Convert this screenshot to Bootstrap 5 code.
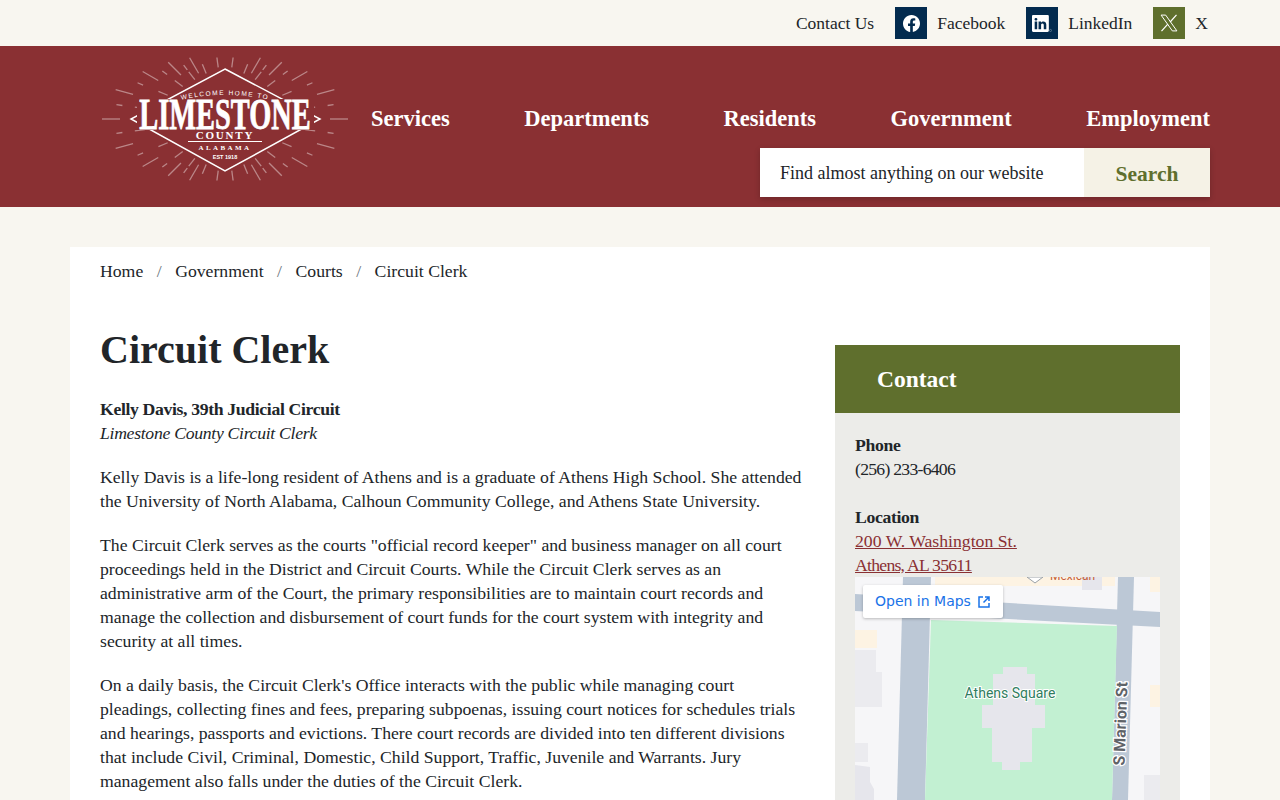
<!DOCTYPE html>
<html lang="en">
<head>
  <meta charset="UTF-8">
  <title>Circuit Clerk - Limestone County</title>
  <link href="https://cdn.jsdelivr.net/npm/bootstrap@5.3.0/dist/css/bootstrap.min.css" rel="stylesheet">
  <style>
    body { background: #f8f6f0; color: #212529; font-family: "Liberation Serif", serif; font-size: 17.7px; line-height: 24px; height: 800px; overflow: hidden; }
    a { color: #212529; text-decoration: none; }
    strong { letter-spacing: -.35px; }
    em { letter-spacing: -.3px; }
    .site-wrap { width: 1140px; margin: 0 auto; }
    .top-bar { height: 46px; padding-right: 2px; gap: 21px; }
    .top-bar a { font-size: 17.5px; }
    .social-link { gap: 10px; }
    .social-box { width: 32px; height: 32px; background: #032b4f; }
    .social-green { background: #5f6f2d; }
    .site-head { background: #8a3033; height: 161px; }
    .head-inner { padding-left: 30px; }
    .logo-box { width: 248px; height: 130px; margin-top: 8px; }
    .head-nav { padding-top: 61px; padding-left: 23px; }
    .head-nav a { color: #fff; font-weight: 700; font-size: 22.5px; }
    .head-search { width: 450px; height: 49px; margin-top: 17px; box-shadow: 0 2px 6px rgba(0,0,0,.2); }
    .head-search input { border: 0; border-radius: 0; padding: 2px 20px 0; font-size: 18px; color: #212529; box-shadow: none !important; height: 49px; }
    .head-search input::placeholder { color: #212529; opacity: 1; }
    .head-search button { border: 0; border-radius: 0; width: 126px; padding: 4px 0 0; background: #f5f2e6; color: #5f6f2d; font-weight: 700; font-size: 21.5px; }
    .main-panel { background: #fff; margin-top: 40px; padding: 12px 30px 0; height: 553px; overflow: hidden; }
    .crumb-sep { color: #6c757d; margin: 0 13.5px; }
    .page-title { font-family: "Liberation Serif", serif; font-weight: 700; font-size: 40px; line-height: 54px; margin: 40px 0 20px; letter-spacing: 0; }
    .body-col { width: 710px; }
    .body-col p { margin-bottom: 20px; }
    .side-col { width: 345px; margin-top: 62px; }
    .side-title { background: #5f6f2d; color: #fff; font-weight: 700; font-size: 23.5px; height: 68px; padding-left: 42px; }
    .side-body { background: #ecece9; padding: 20px 20px 0; height: 400px; }
    .side-body p { margin-bottom: 24px; }
    .side-body a { color: #8a3033; text-decoration: underline; }
    .tight-nums { letter-spacing: -.75px; }
    .map-box { position: relative; width: 305px; height: 223px; }
    .map-box svg { display: block; }
    .map-link { position: absolute; left: 8px; top: 8px; width: 140px; height: 33px; background: #fff; color: #1a73e8 !important; text-decoration: none !important; font-family: "DejaVu Sans", sans-serif; font-size: 14px; line-height: 33px; padding-left: 12px; gap: 6px; box-shadow: 0 1px 3px rgba(0,0,0,.25); border-radius: 2px; }
  </style>
</head>
<body>
  <div class="site-wrap top-bar d-flex justify-content-end align-items-center">
    <a href="#">Contact Us</a>
    <a href="#" class="social-link d-flex align-items-center">
      <span class="social-box d-flex align-items-center justify-content-center">
        <svg width="17" height="17" viewBox="0 0 16 16" fill="#fff"><path d="M16 8.049c0-4.446-3.582-8.05-8-8.05C3.58 0-.002 3.603-.002 8.05c0 4.017 2.926 7.347 6.75 7.951v-5.625h-2.03V8.05H6.75V6.275c0-2.017 1.195-3.131 3.022-3.131.876 0 1.791.157 1.791.157v1.98h-1.009c-.993 0-1.303.621-1.303 1.258v1.51h2.218l-.354 2.326H9.25V16c3.824-.604 6.75-3.934 6.75-7.951z"/></svg>
      </span>
      Facebook
    </a>
    <a href="#" class="social-link d-flex align-items-center">
      <span class="social-box d-flex align-items-center justify-content-center">
        <svg width="20" height="17" viewBox="0 0 19 16" fill="#fff"><path d="M0 1.146C0 .513.526 0 1.175 0h13.65C15.474 0 16 .513 16 1.146v13.708c0 .633-.526 1.146-1.175 1.146H1.175C.526 16 0 15.487 0 14.854V1.146zm4.943 12.248V6.169H2.542v7.225h2.401zm-1.2-8.212c.837 0 1.358-.554 1.358-1.248-.015-.709-.52-1.248-1.342-1.248-.822 0-1.359.54-1.359 1.248 0 .694.521 1.248 1.327 1.248h.016zm4.908 8.212V9.359c0-.216.016-.432.08-.586.173-.431.568-.878 1.232-.878.869 0 1.216.662 1.216 1.634v3.865h2.401V9.25c0-2.22-1.184-3.252-2.764-3.252-1.274 0-1.845.7-2.165 1.193v.025h-.016a5.54 5.54 0 0 1 .016-.025V6.169h-2.4c.03.678 0 7.225 0 7.225h2.4z"/><circle cx="17.6" cy="14.6" r="1" fill="none" stroke="#8fa3b5" stroke-width=".5"/></svg>
      </span>
      LinkedIn
    </a>
    <a href="#" class="social-link d-flex align-items-center">
      <span class="social-box social-green d-flex align-items-center justify-content-center">
        <svg width="20" height="20" viewBox="0 0 24 24" fill="none" stroke="#fff" stroke-width="1.2"><path d="M2.5 2.5 H8 L21.5 21.5 H16 Z"/><path d="M21 2.2 L13.4 10.8 M10.6 13.4 L3 21.8" stroke-width="1.5"/></svg>
      </span>
      X
    </a>
  </div>

  <header class="site-head">
    <div class="site-wrap head-inner d-flex">
      <a href="#" class="logo-box flex-shrink-0">
        <svg width="248" height="130" viewBox="0 0 248 130">
          <defs><path id="arc" d="M80 46 Q125 36 170 46"/></defs>
          <g id="rays" stroke="#fff" stroke-opacity=".42" stroke-width="1.3"></g>
          <path d="M125 15 L220 65 L125 117 L31 65 Z" fill="#8a3033" stroke="#fff" stroke-width="1.5"/>
          <rect x="37" y="45" width="177" height="31" fill="#8a3033"/>
          <text font-family="Liberation Sans, sans-serif" font-size="6.5" fill="#fff" letter-spacing="1.5"><textPath href="#arc" startOffset="50%" text-anchor="middle">WELCOME HOME TO</textPath></text>
          <text transform="translate(125 75) scale(.645 1)" text-anchor="middle" font-family="Liberation Serif, serif" font-weight="700" font-size="44" fill="#fff" stroke="#fff" stroke-width=".8">LIMESTONE</text>
          <text x="125" y="85" text-anchor="middle" font-family="Liberation Serif, serif" font-weight="700" font-size="11" fill="#fff" letter-spacing="1.8">COUNTY</text>
          <path d="M88 87.5 H162" stroke="#fff" stroke-width="1.2"/>
          <text x="125" y="96" text-anchor="middle" font-family="Liberation Serif, serif" font-weight="700" font-size="7" fill="#fff" letter-spacing="2.4">ALABAMA</text>
          <text x="125" y="105" text-anchor="middle" font-family="Liberation Sans, sans-serif" font-weight="700" font-size="5.5" fill="#fff">EST 1918</text>
        </svg>
      </a>
      <div class="flex-grow-1 d-flex flex-column align-items-end">
        <nav class="head-nav w-100 d-flex justify-content-between">
          <a href="#">Services</a>
          <a href="#">Departments</a>
          <a href="#">Residents</a>
          <a href="#">Government</a>
          <a href="#">Employment</a>
        </nav>
        <form class="head-search d-flex" onsubmit="return false">
          <input class="form-control" type="text" placeholder="Find almost anything on our website">
          <button class="btn flex-shrink-0" type="submit">Search</button>
        </form>
      </div>
    </div>
  </header>

  <main class="site-wrap main-panel">
    <nav class="d-flex">
      <a href="#">Home</a><span class="crumb-sep">/</span>
      <a href="#">Government</a><span class="crumb-sep">/</span>
      <a href="#">Courts</a><span class="crumb-sep">/</span>
      <a href="#">Circuit Clerk</a>
    </nav>
    <div class="d-flex justify-content-between align-items-start">
      <div class="body-col">
        <h1 class="page-title">Circuit Clerk</h1>
        <p><strong>Kelly Davis, 39th Judicial Circuit</strong><br><em>Limestone County Circuit Clerk</em></p>
        <p>Kelly Davis is a life-long resident of Athens and is a graduate of Athens High School. She attended the University of North Alabama, Calhoun Community College, and Athens State University.</p>
        <p>The Circuit Clerk serves as the courts "official record keeper" and business manager on all court proceedings held in the District and Circuit Courts. While the Circuit Clerk serves as an administrative arm of the Court, the primary responsibilities are to maintain court records and manage the collection and disbursement of court funds for the court system with integrity and security at all times.</p>
        <p>On a daily basis, the Circuit Clerk's Office interacts with the public while managing court pleadings, collecting fines and fees, preparing subpoenas, issuing court notices for schedules trials and hearings, passports and evictions. There court records are divided into ten different divisions that include Civil, Criminal, Domestic, Child Support, Traffic, Juvenile and Warrants. Jury management also falls under the duties of the Circuit Clerk.</p>
      </div>
      <aside class="side-col">
        <div class="side-title d-flex align-items-center">Contact</div>
        <div class="side-body">
          <p><strong>Phone</strong><br><span class="tight-nums">(256) 233-6406</span></p>
          <p class="mb-0"><strong>Location</strong><br><a href="#">200 W. Washington St.<br><span class="tight-nums">Athens, AL 35611</span></a></p>
          <div class="map-box">
            <svg width="305" height="223" viewBox="0 0 305 223">
              <rect width="305" height="223" fill="#f6f6f8"/>
              <rect x="80" width="180" height="9" fill="#fdf3e3"/>
              <rect x="295" width="10" height="15" fill="#fdf3e3"/>
              <rect x="227" width="20" height="13" fill="#e6e6ec"/>
              <path d="M0 17 L305 35 V50 L0 34 Z" fill="#bcc8d6"/>
              <path d="M48 0 H76 L70 223 H42 Z" fill="#bcc8d6"/>
              <path d="M263 0 H279 L273 223 H257 Z" fill="#bcc8d6"/>
              <path d="M76 43 L262 49 L257 223 L70 223 Z" fill="#c2f0d2"/>
              <path d="M148 90 H172 V97 H180 V128 H190 V151 H177 V185 H165 V193 H147 V185 H137 V151 H127 V128 H138 V97 H148 Z" fill="#e6e6ec"/>
              <path d="M0 73 H21 V95 H27 V130 H0 Z" fill="#ebebef"/>
              <rect y="166" width="13" height="19" fill="#ebebef"/>
              <path d="M0 188 L15 190 V205 L19 212 V223 H0 Z" fill="#e6e6ec"/>
              <rect y="53" width="22" height="18" fill="#fdf3e3"/>
              <rect x="295" y="108" width="10" height="22" fill="#fdf3e3"/>
              <rect x="289" y="198" width="16" height="25" fill="#ebebef"/>
              <path d="M172 0 L180 6 L188 0 Z" fill="#fff" stroke="#9aa0a6"/>
              <text x="195" y="3" font-family="Roboto, sans-serif" font-size="12" fill="#c5603a">Mexican</text>
              <text x="155" y="121" text-anchor="middle" font-family="Roboto, sans-serif" font-size="14" fill="#2f7d5e" stroke="#fff" stroke-width="2" paint-order="stroke">Athens Square</text>
              <text transform="translate(271 147) rotate(-88)" text-anchor="middle" font-family="Roboto, sans-serif" font-weight="700" font-size="16" fill="#5f6368" stroke="#fff" stroke-width="2.5" paint-order="stroke">S Marion St</text>
            </svg>
            <a href="#" class="map-link d-flex align-items-center">Open in Maps
              <svg width="14" height="14" viewBox="0 0 14 14" fill="none" stroke="#1a73e8" stroke-width="1.5"><path d="M6 2 H2 V12 H12 V8 M8 2 H12 V6 M12 2 L6.5 7.5"/></svg>
            </a>
          </div>
        </div>
      </aside>
    </div>
  </main>

  <script>
    // sunburst behind the logo: outer ring of long rays, short ones by the diamond
    const rays = document.getElementById("rays");
    const cx = 125, cy = 65;
    function addRay(a, from, to) {
      const c = Math.cos(a), s = Math.sin(a);
      const l = document.createElementNS("http://www.w3.org/2000/svg", "line");
      l.setAttribute("x1", cx + c * from);
      l.setAttribute("y1", cy + s * from);
      l.setAttribute("x2", cx + c * to);
      l.setAttribute("y2", cy + s * to);
      rays.appendChild(l);
    }
    for (let i = 0; i < 24; i++) {
      const a = i * Math.PI / 12;
      const outer = 1 / Math.hypot(Math.cos(a) / 123, Math.sin(a) / 64);
      const edge = 1 / (Math.abs(Math.cos(a)) / 95 + Math.abs(Math.sin(a)) / 51);
      if (outer - 18 > edge + 3) addRay(a, outer - 18, outer);
      const b = a + Math.PI / 24;
      const edgeB = 1 / (Math.abs(Math.cos(b)) / 95 + Math.abs(Math.sin(b)) / 51);
      addRay(b, edgeB + 4, edgeB + 14);
      const outerB = 1 / Math.hypot(Math.cos(b) / 112, Math.sin(b) / 58);
      if (outerB - 6 > edgeB + 16) addRay(b, outerB - 6, outerB);
    }
  </script>
  <script src="https://cdn.jsdelivr.net/npm/bootstrap@5.3.0/dist/js/bootstrap.bundle.min.js"></script>
</body>
</html>
